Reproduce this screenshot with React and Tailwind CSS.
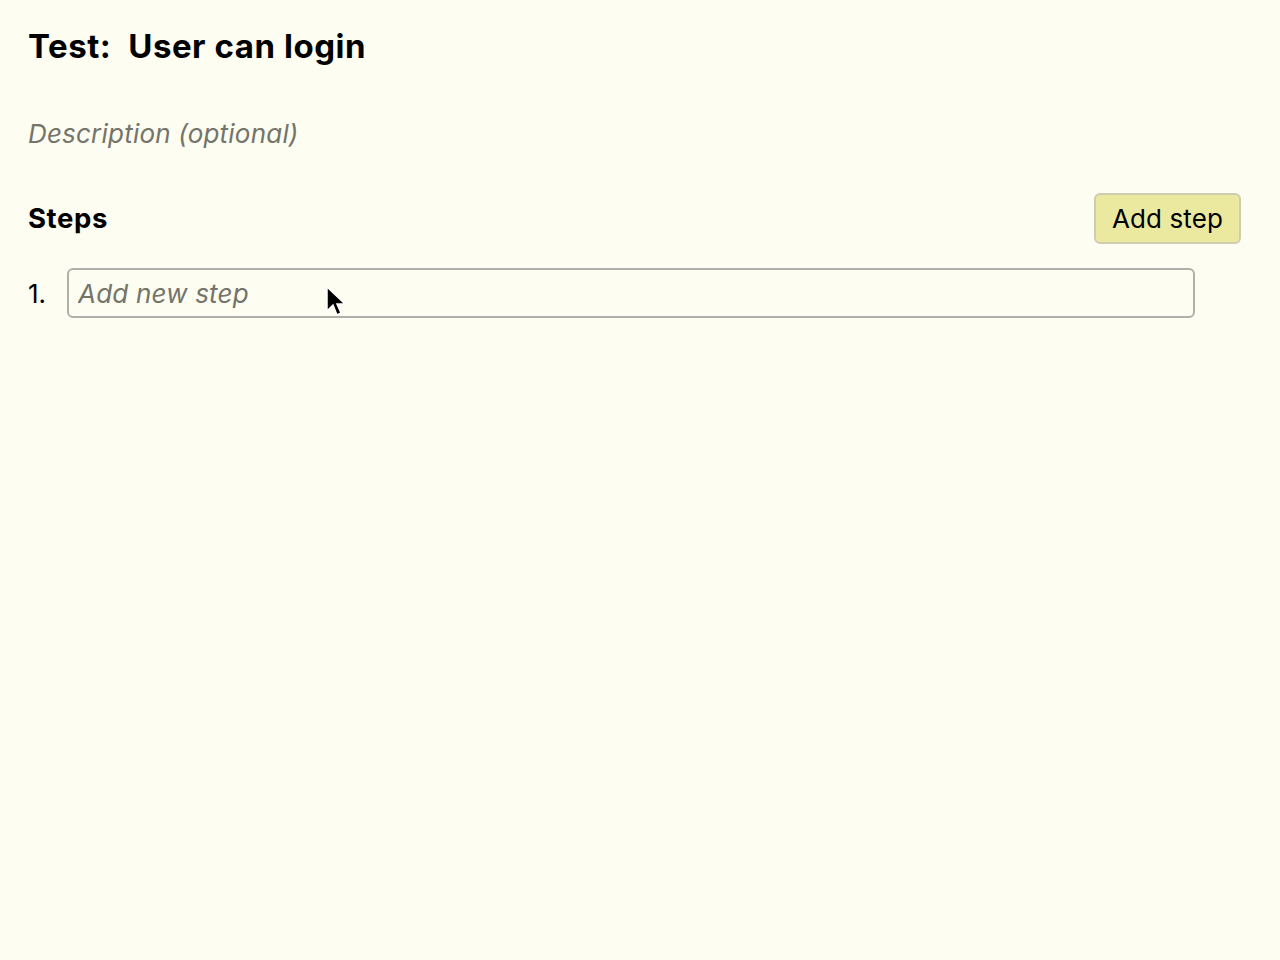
export default function App() {
  return (
    <div
      className="relative min-h-[960px] w-full bg-[#fdfdf1] pl-[28px] pr-[39px] pt-[24px] text-black"
      style={{ fontFamily: 'Inter, "Noto Sans", sans-serif' }}
    >
      <h1 className="text-[33px] font-bold leading-[44px] tracking-[0.55px] whitespace-pre">Test:  User can login</h1>

      <p className="mt-[50px] text-[26px] italic leading-[32px] tracking-[0.2px] text-[#74746a]">Description (optional)</p>

      <div className="mt-[43px] flex items-center justify-between">
        <h2 className="text-[27.5px] font-bold tracking-[0.6px]">Steps</h2>
        <button className="h-[51px] rounded-[6px] border-2 border-[#cfcdb0] bg-[#ebe9a0] px-[16px] text-[26px] tracking-[0.1px]">
          Add step
        </button>
      </div>

      <ol className="mt-[24px]">
        <li className="flex items-center">
          <span className="w-[39px] text-[26px]">1.</span>
          <input
            className="h-[50px] w-[1128px] rounded-[6px] border-2 border-[#b0b0aa] bg-transparent px-[9px] text-[26px] italic tracking-[0.2px] placeholder:text-[#74746a] outline-none"
            placeholder="Add new step"
          />
        </li>
      </ol>

      <svg
        className="absolute left-[326px] top-[286px]"
        width="22"
        height="34"
        viewBox="0 0 22 34"
      >
        <path d="M1 1 L1 25 L7 19 L11 29 L15 27 L11 18 L19 18 Z" fill="black" stroke="white" strokeWidth="1.5" />
      </svg>
    </div>
  );
}
